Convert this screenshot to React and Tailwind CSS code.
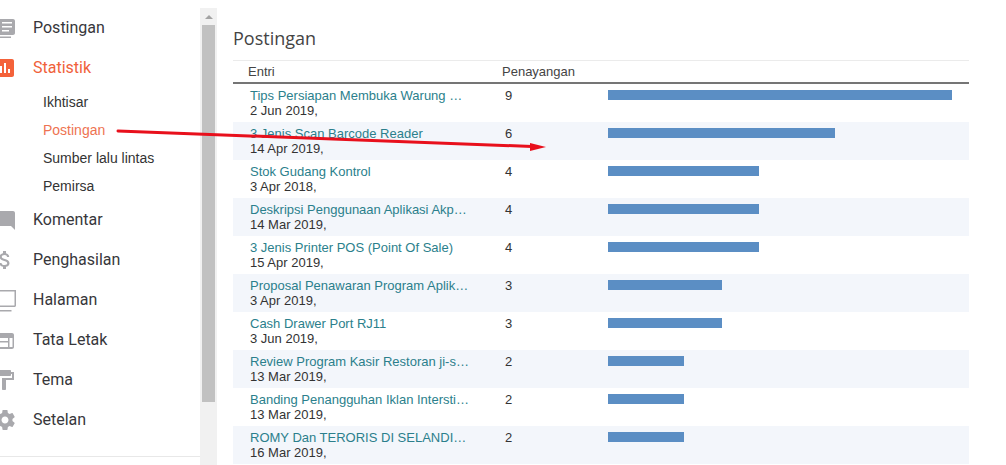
const menu = [
  { label: "Postingan", icon: "post" },
  { label: "Statistik", icon: "stats", active: true },
  { label: "Komentar", icon: "comment" },
  { label: "Penghasilan", icon: "money" },
  { label: "Halaman", icon: "page" },
  { label: "Tata Letak", icon: "layout" },
  { label: "Tema", icon: "paint" },
  { label: "Setelan", icon: "gear" },
];

const subMenu = [
  { label: "Ikhtisar" },
  { label: "Postingan", active: true },
  { label: "Sumber lalu lintas" },
  { label: "Pemirsa" },
];

const rows = [
  { title: "Tips Persiapan Membuka Warung …", date: "2 Jun 2019,", views: 9, bar: "w-[344px]" },
  { title: "3 Jenis Scan Barcode Reader", date: "14 Apr 2019,", views: 6, bar: "w-[227px]" },
  { title: "Stok Gudang Kontrol", date: "3 Apr 2018,", views: 4, bar: "w-[151px]" },
  { title: "Deskripsi Penggunaan Aplikasi Akp…", date: "14 Mar 2019,", views: 4, bar: "w-[151px]" },
  { title: "3 Jenis Printer POS (Point Of Sale)", date: "15 Apr 2019,", views: 4, bar: "w-[151px]" },
  { title: "Proposal Penawaran Program Aplik…", date: "3 Apr 2019,", views: 3, bar: "w-[114px]" },
  { title: "Cash Drawer Port RJ11", date: "3 Jun 2019,", views: 3, bar: "w-[114px]" },
  { title: "Review Program Kasir Restoran ji-s…", date: "13 Mar 2019,", views: 2, bar: "w-[76px]" },
  { title: "Banding Penangguhan Iklan Intersti…", date: "13 Mar 2019,", views: 2, bar: "w-[76px]" },
  { title: "ROMY Dan TERORIS DI SELANDI…", date: "16 Mar 2019,", views: 2, bar: "w-[76px]" },
];

function MenuIcon({ name, className }) {
  return (
    <svg viewBox="0 0 24 24" fill="currentColor" className={className}>
      {name === "post" && (
        <>
          <path fillRule="evenodd" d="M4 3h16c1.100 0 2 .9 2 2v12c0 1.100-.9 2-2 2H4c-1.100 0-2-.9-2-2V5c0-1.100.9-2 2-2zm5 3v1.500h10V6H9zm0 4v1.500h10V10H9zm0 4v1.500h7V14H9z" />
          <rect x="2" y="20.500" width="16" height="1.500" />
        </>
      )}
      {name === "stats" && (
        <path d="M19 3H5c-1.100 0-2 .9-2 2v14c0 1.100.9 2 2 2h14c1.100 0 2-.9 2-2V5c0-1.100-.9-2-2-2zM9 17H7v-7h2v7zm4 0h-2V7h2v10zm4 0h-2v-4h2v4z" />
      )}
      {name === "comment" && (
        <path d="M21.990 5c0-1.100-.89-2-1.990-2H4c-1.100 0-2 .9-2 2v11c0 1.100.9 2 2 2h14l4 4-.01-17z" />
      )}
      {name === "money" && (
        <path d="M11.800 10.900c-2.270-.59-3-1.200-3-2.150 0-1.090 1.010-1.850 2.700-1.850 1.780 0 2.440.85 2.500 2.100h2.210c-.07-1.720-1.120-3.300-3.210-3.810V3h-3v2.160c-1.940.42-3.500 1.680-3.500 3.610 0 2.310 1.910 3.460 4.700 4.130 2.500.6 3 1.480 3 2.410 0 .69-.49 1.790-2.700 1.790-2.060 0-2.870-.92-2.980-2.100h-2.200c.12 2.190 1.760 3.420 3.680 3.830V21h3v-2.150c1.950-.37 3.500-1.500 3.500-3.550 0-2.840-2.430-3.810-4.700-4.400z" />
      )}
      {name === "page" && (
        <>
          <path fillRule="evenodd" d="M3 2h20v15.500c0 .8-.7 1.500-1.500 1.500H3c-.8 0-1.500-.7-1.500-1.500v-14C1.500 2.700 2.200 2 3 2zm0 1.500v14h18.500v-14H3z" />
          <rect x="1.500" y="22" width="17" height="1.500" />
        </>
      )}
      {name === "layout" && (
        <path fillRule="evenodd" d="M3 5h16c1.100 0 2 .9 2 2v12c0 1.100-.9 2-2 2H3c-1.100 0-2-.9-2-2V7c0-1.100.9-2 2-2zm0 5v3h12v-3H3zm0 4.500V19h12v-4.500H3zM16.500 10v9H19.500v-9h-3z" />
      )}
      {name === "paint" && (
        <path d="M18 4V3c0-.55-.45-1-1-1H5c-.55 0-1 .45-1 1v4c0 .55.45 1 1 1h12c.55 0 1-.45 1-1V6h1v4H9v11c0 .55.45 1 1 1h2c.55 0 1-.45 1-1v-9h8V4h-3z" />
      )}
      {name === "gear" && (
        <path d="M19.430 12.980c.04-.32.07-.64.07-.98s-.03-.66-.07-.98l2.110-1.650c.19-.15.24-.42.12-.64l-2-3.460c-.12-.22-.39-.3-.61-.22l-2.490 1c-.52-.4-1.080-.73-1.690-.98l-.38-2.650C14.460 2.180 14.250 2 14 2h-4c-.25 0-.46.18-.49.42l-.38 2.650c-.61.25-1.170.59-1.690.98l-2.490-1c-.23-.09-.49 0-.61.22l-2 3.460c-.13.22-.07.49.12.64l2.110 1.650c-.04.32-.07.65-.07.98s.03.66.07.98l-2.110 1.650c-.19.15-.24.42-.12.64l2 3.460c.12.22.39.3.61.22l2.490-1c.52.4 1.080.73 1.690.98l.38 2.650c.03.24.24.42.49.42h4c.25 0 .46-.18.49-.42l.38-2.650c.61-.25 1.170-.59 1.690-.98l2.490 1c.23.09.49 0 .61-.22l2-3.460c.12-.22.07-.49-.12-.64l-2.110-1.650zM12 15.500c-1.930 0-3.500-1.570-3.500-3.500s1.570-3.500 3.500-3.500 3.500 1.570 3.500 3.500-1.570 3.500-3.500 3.500z" />
      )}
    </svg>
  );
}

function MenuItem({ item }) {
  return (
    <div className="flex h-[40px] items-center">
      <MenuIcon
        name={item.icon}
        className={`ml-[-7px] mr-[16px] h-[24px] w-[24px] shrink-0 ${item.active ? "text-[#f4623a]" : "text-[#a9a9ad]"}`}
      />
      <span
        className={`font-['Roboto',sans-serif] text-[16px] ${item.active ? "text-[#f0613a]" : "text-[#37373b]"}`}
      >
        {item.label}
      </span>
    </div>
  );
}

function Sidebar() {
  const [first, stats, ...others] = menu;
  return (
    <aside className="flex h-full w-[200px] shrink-0 flex-col overflow-hidden pt-[8px]">
      <MenuItem item={first} />
      <MenuItem item={stats} />
      <div className="flex flex-col pl-[43px]">
        {subMenu.map((sub) => (
          <div
            key={sub.label}
            className={`flex h-[28px] items-center font-['Liberation_Sans',sans-serif] text-[14px] ${sub.active ? "text-[#ee7352]" : "text-[#333333]"}`}
          >
            {sub.label}
          </div>
        ))}
      </div>
      {others.map((item) => (
        <MenuItem key={item.label} item={item} />
      ))}
      <div className="mt-[16px] border-t border-[#e8e8e8]" />
    </aside>
  );
}

function Scrollbar() {
  return (
    <div className="mt-[8px] flex h-full w-[17px] shrink-0 flex-col items-center bg-[#f1f1f1]">
      <div className="flex h-[17px] w-full items-center justify-center">
        <div className="h-0 w-0 border-x-[4px] border-b-[4px] border-x-transparent border-b-[#a3a3a3]" />
      </div>
      <div className="h-[377px] w-[13px] bg-[#c1c1c1]" />
    </div>
  );
}

function PostRow({ row, shaded }) {
  return (
    <div
      className={`flex h-[38px] font-['Liberation_Sans',sans-serif] text-[13px] leading-[15px] ${shaded ? "bg-[#f3f6fb]" : "bg-white"}`}
    >
      <div className="w-[272px] shrink-0 pl-[17px] pt-[4px]">
        <div className="whitespace-nowrap text-[#2b7f8c]">{row.title}</div>
        <div className="text-[#333333]">{row.date}</div>
      </div>
      <div className="w-[103px] shrink-0 pt-[4px] text-[#333333]">{row.views}</div>
      <div className="pt-[6px]">
        <div className={`h-[10px] bg-[#5b8ec4] ${row.bar}`} />
      </div>
    </div>
  );
}

export default function App() {
  return (
    <div className="relative flex h-[465px] w-[1006px] overflow-hidden bg-white">
      <Sidebar />
      <Scrollbar />
      <main className="ml-[16px] w-[736px] shrink-0">
        <h1 className="flex h-[60px] items-center pt-[17px] font-['Open_Sans',sans-serif] text-[18px] text-[#444444]">
          Postingan
        </h1>
        <div className="flex h-[22px] items-center border-t border-[#ebebeb] font-['Liberation_Sans',sans-serif] text-[13px] text-[#444444]">
          <div className="w-[269px] pl-[15px]">Entri</div>
          <div>Penayangan</div>
        </div>
        <div className="border-t-[2px] border-[#757575]">
          {rows.map((row, i) => (
            <PostRow key={row.title} row={row} shaded={i % 2 === 1} />
          ))}
        </div>
      </main>

      {/* panah merah di atas konten */}
      <svg className="absolute left-0 top-0 h-[465px] w-[1006px]" viewBox="0 0 1006 465" fill="none">
        <path d="M118 131 L532 146.500" stroke="#e8101c" strokeWidth="3" strokeLinecap="round" />
        <path d="M546 147 L530 143 L530 151 Z" fill="#e8101c" />
      </svg>
    </div>
  );
}
